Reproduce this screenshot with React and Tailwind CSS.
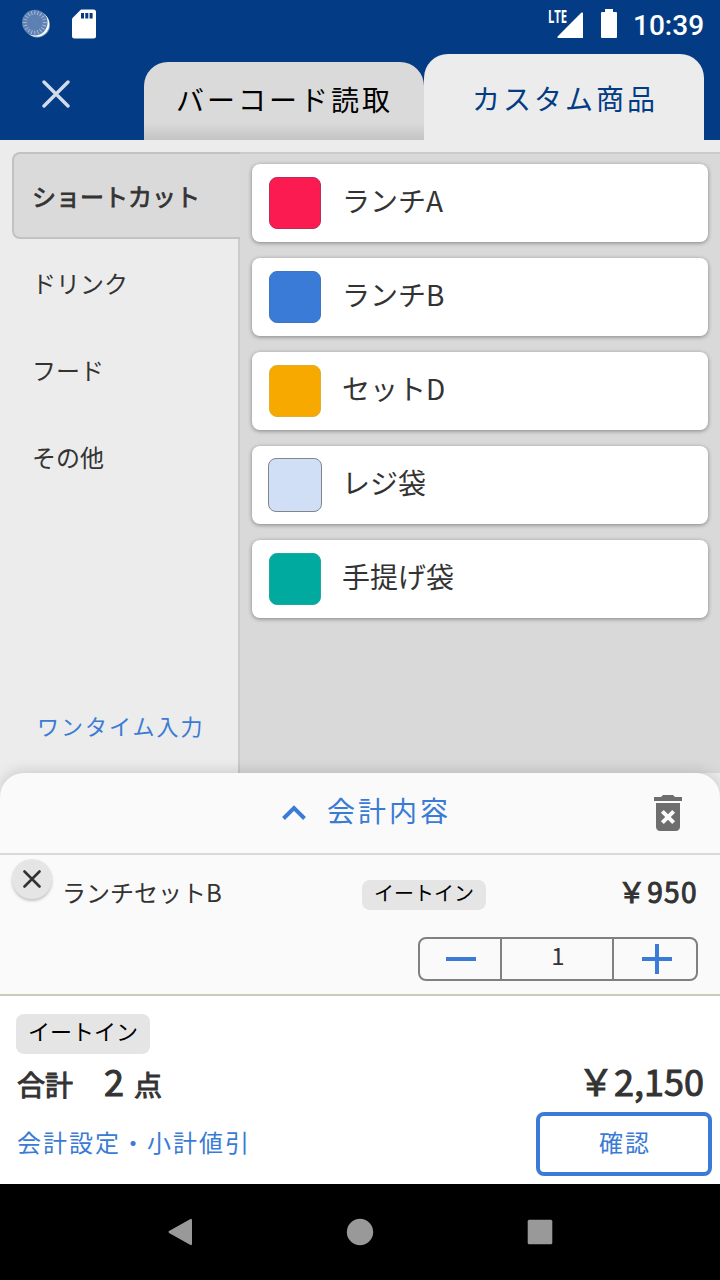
import { MdDeleteForever } from "react-icons/md"

const categories = [
  { name: "ショートカット", active: true },
  { name: "ドリンク" },
  { name: "フード" },
  { name: "その他" },
]

const products = [
  { name: "ランチA", swatch: "bg-[#fc1b50] border-[#b8305a]" },
  { name: "ランチB", swatch: "bg-[#3a7bd8] border-[#3f76c0]" },
  { name: "セットD", swatch: "bg-[#f8a900] border-[#e0ae2c]" },
  { name: "レジ袋", swatch: "bg-[#d0dff6] border-[#80858e]", outlined: true },
  { name: "手提げ袋", swatch: "bg-[#00aa9f] border-[#1fa89f]" },
]

function StatusBar() {
  const ticks = Array.from({ length: 20 }, (_, i) => i * 18)
  return (
    <div className="h-12 pl-5 pr-4 flex items-center justify-between text-white">
      <div className="flex items-center">
        {/* Sync indicator */}
        <svg width="32" height="32" viewBox="0 0 32 32">
          <circle cx="17.3" cy="16.9" r="12.6" fill="#8fa9cf" />
          <circle cx="16.6" cy="16" r="12.6" fill="#fff" />
          <circle cx="14.8" cy="14.6" r="12.8" fill="#5d80b3" />
          {ticks.map((deg) => (
            <path key={deg} d="M14.8 2.6v4" stroke="#a5b9d6" strokeWidth="1" transform={`rotate(${deg} 14.8 14.6)`} />
          ))}
        </svg>
        {/* SD card */}
        <svg className="ml-5" width="24" height="30" viewBox="0 0 24 30">
          <path d="M9 0.5h12.5a2.5 2.5 0 0 1 2.5 2.5v24a2.5 2.5 0 0 1-2.5 2.5h-19a2.5 2.5 0 0 1-2.5-2.5V9.5z" fill="#fff" />
          <path d="M9 4h3v5.5H9zM13.3 4h3v5.5h-3zM17.6 4h3v5.5h-3z" fill="#033c84" />
        </svg>
      </div>
      <div className="flex items-center">
        <div className="relative w-9 h-[30px]">
          <span className="absolute left-0 -top-px origin-left scale-x-[0.66] font-['Open_Sans'] text-[17px] leading-[17px] font-bold">
            LTE
          </span>
          <svg className="absolute left-[9px] top-[3px]" width="26" height="27" viewBox="0 0 26 27">
            <path d="M24.5 0.5Q26 0 26 1.5V26H1.5Q-0.5 26 0.8 24.2z" fill="#fff" />
          </svg>
        </div>
        <svg className="ml-[17px]" width="16" height="30" viewBox="0 0 16 30">
          <path d="M4 0h8v3h3q1 0 1 1V28q0 1-1 1H1q-1 0-1-1V4q0-1 1-1h3z" fill="#fff" />
        </svg>
        <span className="ml-4 mt-[3px] w-[71px] font-[Roboto] text-[28px] leading-none font-medium whitespace-nowrap">10:39</span>
      </div>
    </div>
  )
}

function Header() {
  return (
    <header className="h-[140px] bg-[#033c84] flex flex-col">
      <StatusBar />
      <div className="flex-1 flex items-end">
        <button className="w-36 h-[92px] pl-[42px] flex items-center">
          <svg width="28" height="28" viewBox="0 0 28 28">
            <path d="M2 2l24 24M26 2L2 26" stroke="#d3dcea" strokeWidth="3.4" strokeLinecap="round" />
          </svg>
        </button>
        <button className="w-[280px] h-[78px] pl-px pb-1 rounded-t-[24px] bg-[linear-gradient(#dadada_78%,#c4c4c4)] text-black text-[28px] tracking-[3px] flex items-center justify-center">
          バーコード読取
        </button>
        <button className="w-[280px] h-[86px] pl-[2px] pt-[2px] rounded-t-[24px] bg-[#ececec] text-[#033c84] text-[28px] tracking-[3px] flex items-center justify-center">
          カスタム商品
        </button>
      </div>
    </header>
  )
}

function Sidebar() {
  return (
    <aside className="w-60 flex flex-col">
      <nav className="pl-3 flex flex-col">
        {categories.map((c) => (
          <button
            key={c.name}
            className={
              c.active
                ? "h-[87px] pl-[18px] text-left text-[24px] [-webkit-text-stroke:0.8px_#333] bg-[#dadada] border-2 border-r-0 border-[#c2c2c2] rounded-l-lg"
                : "h-[87px] pl-5 pt-px text-left text-[24px] border-r-2 border-[#cbcbcb]"
            }
          >
            {c.name}
          </button>
        ))}
      </nav>
      <div className="flex-1 border-r-2 border-[#cbcbcb] flex items-end pl-[37px] pb-8">
        <button className="text-[22px] leading-8 tracking-[2px] text-[#3a7bd5]">ワンタイム入力</button>
      </div>
    </aside>
  )
}

function ProductList() {
  return (
    <main className="flex-1 bg-[#d9d9d9] border-t-2 border-[#cbcbcb] px-3 pt-2.5 flex flex-col gap-4">
      {products.map((p) => (
        <button
          key={p.name}
          className="h-[78px] px-4 bg-white rounded-lg shadow-[0_1px_4px_rgba(0,0,0,0.4)] flex items-center"
        >
          <span className="size-[54px] flex items-center justify-center">
            <span className={`${p.outlined ? "size-[54px]" : "size-[52px]"} border rounded-lg ${p.swatch}`} />
          </span>
          <span className="ml-5 pb-[7px] text-[28px] leading-10">{p.name}</span>
        </button>
      ))}
    </main>
  )
}

function CartSheet() {
  return (
    <section className="h-[223px] rounded-t-[24px] bg-[#fafafa] shadow-[0_-2px_14px_rgba(0,0,0,0.14)] border-b-2 border-[#cccbb5]">
      <div className="h-[82px] border-b-2 border-[#dadada] flex items-center">
        <div className="w-[280px]" />
        <button className="flex items-center text-[#3a7bd5]">
          <svg className="mt-0.5" width="28" height="20" viewBox="0 0 28 20">
            <path d="M3.5 14.5L14 4l10.5 10.5" stroke="currentColor" strokeWidth="4" fill="none" />
          </svg>
          <span className="ml-[19px] pb-[7px] text-[28px] leading-10 tracking-[3px]">会計内容</span>
        </button>
        <button className="ml-auto mr-7 text-[#6e6e6e]">
          <MdDeleteForever className="size-12" />
        </button>
      </div>
      <div className="flex pl-3 pr-[22px]">
        <button className="mt-1 size-10 rounded-full bg-[#e5e5e5] shadow-[0_2px_3px_rgba(0,0,0,0.22)] flex items-center justify-center">
          <svg width="18" height="18" viewBox="0 0 18 18">
            <path d="M1.5 1.5l15 15M16.5 1.5l-15 15" stroke="#333" strokeWidth="2.6" strokeLinecap="round" />
          </svg>
        </button>
        <span className="ml-2.5 mt-[17px] w-[300px] text-[24px] leading-10">ランチセットB</span>
        <span className="mt-[25px] h-[30px] px-3 rounded-lg bg-[#e5e5e5] text-black text-[20px] leading-[25px]">イートイン</span>
        <span className="ml-auto mt-4 text-[28px] leading-10 tracking-[1.4px] [-webkit-text-stroke:1px_#333] whitespace-nowrap">
          ￥950
        </span>
      </div>
      <div className="flex justify-end pr-[22px] pt-[25px]">
        <div className="w-[280px] h-11 border-2 border-[#808080] rounded-lg flex">
          <button className="w-20 pl-0.5 flex items-center justify-center">
            <svg width="30" height="30" viewBox="0 0 30 30">
              <path d="M0 15h30" stroke="#3a7bd5" strokeWidth="4" />
            </svg>
          </button>
          <span className="w-[114px] pl-0.5 border-x-2 border-[#808080] text-center text-[24px] leading-[32px]">1</span>
          <button className="flex-1 pl-1 flex items-center justify-center">
            <svg width="30" height="30" viewBox="0 0 30 30">
              <path d="M0 15h30M15 0v30" stroke="#3a7bd5" strokeWidth="4" />
            </svg>
          </button>
        </div>
      </div>
    </section>
  )
}

function Summary() {
  return (
    <section className="relative h-[188px] bg-white pl-4 pr-2 pt-[18px]">
      <span className="block w-[134px] h-10 px-3 rounded-lg bg-[#e5e5e5] text-black text-[22px] leading-[33px]">イートイン</span>
      <div className="h-[58px] pl-px pr-2 flex items-baseline [-webkit-text-stroke:1px_#333]">
        <span className="text-[28px]">合計</span>
        <span className="ml-[31px] text-[36px] leading-[52px]">2</span>
        <span className="ml-2.5 text-[28px]">点</span>
        <span className="ml-auto text-[36px] leading-[52px]">￥2,150</span>
      </div>
      <div className="flex justify-between">
        <button className="h-[60px] pl-px pb-px text-[24px] tracking-[2px] text-[#3a7bd5]">会計設定・小計値引</button>
        <button className="w-44 h-16 pl-[2px] pb-[5px] border-4 border-[#3a7bd5] rounded-lg text-[24px] tracking-[2px] text-[#3a7bd5]">
          確認
        </button>
      </div>
    </section>
  )
}

function NavigationBar() {
  return (
    <div className="h-24 bg-black text-[#999] flex items-center justify-center gap-[152px]">
      <svg width="28" height="28" viewBox="0 0 28 28" fill="currentColor">
        <path d="M24 1.2Q26 0 26 2.5V25.5Q26 28 24 26.8L3.5 15.2Q1.5 14 3.5 12.8z" />
      </svg>
      <svg width="28" height="28" viewBox="0 0 28 28" fill="currentColor">
        <circle cx="14" cy="14" r="13.2" />
      </svg>
      <svg width="28" height="28" viewBox="0 0 28 28" fill="currentColor">
        <rect x="1.7" y="1.7" width="24.6" height="24.6" rx="1.5" />
      </svg>
    </div>
  )
}

export default function App() {
  return (
    <div className="w-[720px] h-[1280px] overflow-hidden flex flex-col bg-[#ececec] text-[#333] font-['Noto_Sans_CJK_JP',sans-serif]">
      <Header />
      <div className="h-[633px] pt-3 flex">
        <Sidebar />
        <ProductList />
      </div>
      <CartSheet />
      <Summary />
      <NavigationBar />
    </div>
  )
}
